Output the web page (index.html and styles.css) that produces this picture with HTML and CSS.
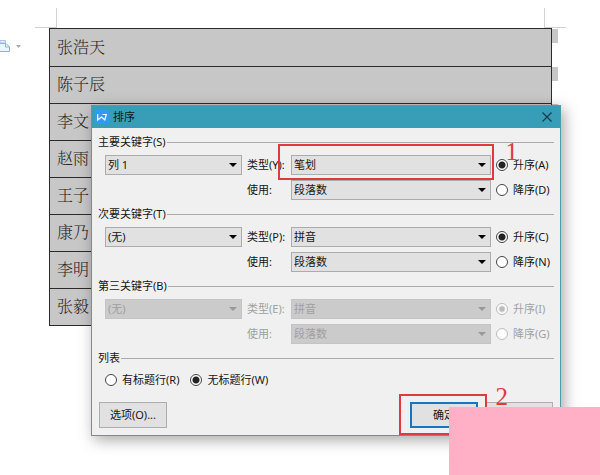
FILE: index.html
```html
<!DOCTYPE html>
<html lang="zh-CN">
<head>
<meta charset="utf-8">
<title>排序</title>
<link rel="stylesheet" href="styles.css">
</head>
<body>
<main class="page">
  <div class="margins"><span class="mark mark-left"></span><span class="mark mark-right"></span></div>
  <svg class="paste" width="22" height="16" viewBox="0 0 22 16" aria-hidden="true">
    <path d="M0 2.500H5.500V5H0Z" fill="#e3eefa" stroke="#a9c4e4"/>
    <path d="M-1 5.500H6L9.500 9V13.500H-1Z" fill="#edf5fd" stroke="#8fb3dc"/>
    <path d="M5.500 5.500V9H9.500" fill="none" stroke="#8fb3dc"/>
    <path d="M16 7H21L18.500 10Z" fill="#a8abb0"/>
  </svg>
  <table class="names">
    <tbody>
      <tr><td>张浩天</td></tr>
      <tr><td>陈子辰</td></tr>
      <tr><td>李文</td></tr>
      <tr><td>赵雨</td></tr>
      <tr><td>王子</td></tr>
      <tr><td>康乃</td></tr>
      <tr><td>李明</td></tr>
      <tr><td>张毅</td></tr>
    </tbody>
  </table>
</main>

<form class="dialog" role="dialog" aria-labelledby="title">
  <header class="titlebar">
    <svg width="14" height="14" viewBox="0 0 14 14" aria-hidden="true">
      <rect width="14" height="14" rx="2" fill="#2f9bf5"/>
      <path d="M2.700 4V10L6.500 7L9.800 10L11.300 4.500H7.500" fill="none" stroke="#fff" stroke-width="1.200"/>
    </svg>
    <h1 id="title">排序</h1>
    <button class="close" type="button" aria-label="关闭">
      <svg width="10" height="10" viewBox="0 0 10 10"><path d="M.5 .5L9.500 9.500M9.500 .5L.5 9.500" stroke="#173c48" stroke-width="1.200"/></svg>
    </button>
  </header>
  <div class="body">
    <fieldset>
      <legend>主要关键字(S)</legend>
      <div class="fields">
        <span class="combo"><select aria-label="主要关键字"><option>列 1</option></select></span>
        <label for="type1">类型(Y):</label>
        <span class="combo"><select id="type1"><option>笔划</option></select></span>
        <label class="choice"><input type="radio" name="order1" checked>升序(A)</label>
        <label class="second" for="use1">使用:</label>
        <span class="combo"><select id="use1"><option>段落数</option></select></span>
        <label class="choice"><input type="radio" name="order1">降序(D)</label>
      </div>
    </fieldset>
    <fieldset>
      <legend>次要关键字(T)</legend>
      <div class="fields">
        <span class="combo"><select aria-label="次要关键字"><option>(无)</option></select></span>
        <label for="type2">类型(P):</label>
        <span class="combo"><select id="type2"><option>拼音</option></select></span>
        <label class="choice"><input type="radio" name="order2" checked>升序(C)</label>
        <label class="second" for="use2">使用:</label>
        <span class="combo"><select id="use2"><option>段落数</option></select></span>
        <label class="choice"><input type="radio" name="order2">降序(N)</label>
      </div>
    </fieldset>
    <fieldset>
      <legend>第三关键字(B)</legend>
      <div class="fields disabled">
        <span class="combo"><select aria-label="第三关键字" disabled><option>(无)</option></select></span>
        <label for="type3">类型(E):</label>
        <span class="combo"><select id="type3" disabled><option>拼音</option></select></span>
        <label class="choice"><input type="radio" name="order3" checked disabled>升序(I)</label>
        <label class="second" for="use3">使用:</label>
        <span class="combo"><select id="use3" disabled><option>段落数</option></select></span>
        <label class="choice"><input type="radio" name="order3" disabled>降序(G)</label>
      </div>
    </fieldset>
    <fieldset>
      <legend>列表</legend>
      <div class="list">
        <label class="choice"><input type="radio" name="header">有标题行(R)</label>
        <label class="choice"><input type="radio" name="header" checked>无标题行(W)</label>
      </div>
    </fieldset>
    <footer class="actions">
      <button class="options" type="button">选项(O)...</button>
      <button class="primary" type="submit">确定</button>
      <button type="button" aria-label="取消"></button>
    </footer>
  </div>
  <span class="frame frame-type"></span>
  <span class="step step-one">1</span>
  <span class="frame frame-ok"></span>
  <span class="step step-two">2</span>
</form>
<div class="cover"></div>
</body>
</html>
```
FILE: styles.css
```css
* { box-sizing: border-box; }

body {
  margin: 0;
  min-height: 100vh;
  position: relative;
  overflow: hidden;
  background: #fff;
  color: #161616;
  font: 11px/16px "Noto Sans", "Noto Sans CJK SC", sans-serif;
}

.page { padding: 8px 48px 0 49px; position: relative; }

.margins { display: flex; justify-content: space-between; height: 20px; margin: 0 -14px; }
.mark { width: 22px; border-bottom: 1px solid #d2d2d2; }
.mark-left { border-right: 1px solid #d2d2d2; }
.mark-right { border-left: 1px solid #d2d2d2; }

.paste { position: absolute; left: 0; top: 38px; }

.names { width: 100%; border-collapse: collapse; background: #c7c7c7; }
.names td {
  position: relative;
  height: 37px;
  padding: 0 7px;
  border: 1px solid #2b2b2b;
  color: #262626;
  font: 300 16px/24px "Liberation Serif", "Noto Serif CJK SC", "Noto Sans CJK SC", serif;
}
.names tr:first-child td { height: 38px; }
.names td::after {
  content: "";
  position: absolute;
  top: 0;
  right: -7px;
  width: 6px;
  height: 14px;
  background: #c7c7c7;
}

.dialog {
  position: absolute;
  top: 105px;
  left: 91px;
  right: 39px;
  border: 1px solid #4b9fa8;
  background: #f0f0f0;
  box-shadow: 3px 4px 14px rgba(0, 0, 0, .35);
}

.titlebar {
  display: flex;
  align-items: center;
  gap: 4px;
  height: 22px;
  padding: 0 8px 0 3px;
  background: #389db6;
}
.titlebar h1 { flex: 1; margin: 0; font-size: 11px; font-weight: 400; }
.close { display: flex; padding: 0; border: 0; background: none; }

.body { padding: 6px; }

fieldset { min-width: 0; margin: 0 0 6px; padding: 0; border: 0; }
legend { display: flex; align-items: center; gap: 1px; width: 100%; padding: 0; }
legend::after { content: ""; flex: 1; height: 1px; background: #aaa; }

.fields {
  display: grid;
  grid-template-columns: 137fr 39px 200fr 58px;
  gap: 5px;
  padding: 5px 0 0 7px;
  align-items: center;
  white-space: nowrap;
}
.second { grid-column: 2; }

.combo { position: relative; display: flex; height: 20px; }
.combo::after {
  content: "";
  position: absolute;
  right: 5px;
  top: 8px;
  border: 4px solid transparent;
  border-top: 4px solid #000;
  border-bottom: 0;
  pointer-events: none;
}
select {
  appearance: none;
  width: 100%;
  padding: 0 2px;
  border: 1px solid #acacac;
  border-radius: 0;
  background: #e1e1e1;
  color: inherit;
  font: inherit;
}
select:disabled { border-color: #c4c4c4; background: #cbcbcb; color: #a0a0a0; opacity: 1; }
.disabled { color: #a0a0a0; }
.disabled .combo::after { border-top-color: #999; }

.choice { display: flex; align-items: center; gap: 5px; }
input {
  appearance: none;
  flex: none;
  width: 12px;
  height: 12px;
  margin: 0;
  border: 1px solid #444;
  border-radius: 50%;
  background: #fff;
}
input:checked { background: radial-gradient(circle, #222 3px, #fff 4px); }
input:disabled { border-color: #bbb; }
input:checked:disabled { background: radial-gradient(circle, #bbb 2px, #fff 4px); }

.list { display: flex; gap: 11px; padding: 6px 0 1px 7px; }

.actions { display: flex; gap: 7px; padding: 7px 1px 1px; }
.actions button {
  width: 68px;
  height: 26px;
  padding: 0;
  border: 1px solid #adadad;
  background: #e1e1e1;
  color: inherit;
  font: inherit;
}
.actions .options { margin-right: auto; }
.actions .primary { border: 2px solid #1976be; }

.frame { position: absolute; border: 2px solid #df3a3e; pointer-events: none; }
.frame-type { left: 186px; right: 66px; top: 38px; height: 36px; }
.frame-ok { right: 73px; bottom: 0; width: 88px; height: 41px; }

.step { position: absolute; color: #df3a3e; font: 25px/24px "Liberation Serif", serif; }
.step-one { right: 42px; top: 34px; }
.step-two { right: 52px; top: 279px; }

.cover { position: absolute; right: 0; bottom: 0; width: 151px; height: 68px; background: #ffb0c7; }
```
